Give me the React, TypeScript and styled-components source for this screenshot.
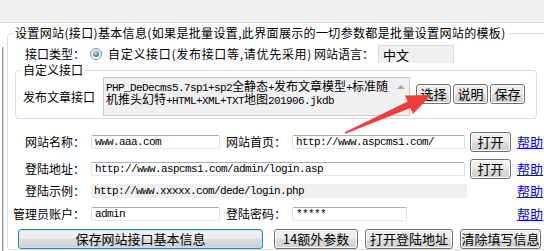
import React from 'react';
import styled, { createGlobalStyle } from 'styled-components';

const GlobalStyle = createGlobalStyle`
  html, body {
    margin: 0;
    padding: 0;
    background: #fff;
  }
  body {
    font-family: "Noto Sans CJK SC", "Liberation Sans", sans-serif;
    font-size: 12px;
    color: #000;
  }
`;

const splitRuns = (text: string) => text.match(/[\x20-\x7e]+|[^\x20-\x7e]+/g) ?? [];

function MixedText({ text }: { text: string }) {
  return (
    <>
      {splitRuns(text).map((run, i) =>
        /^[\x20-\x7e]+$/.test(run) ? <Ascii key={i}>{run}</Ascii> : <Wide key={i}>{run}</Wide>
      )}
    </>
  );
}

function App() {
  return (
    <Page>
      <GlobalStyle />
      <TopBar />
      <Body>
        <Rail />
        <Main>
          <Group $width={600}>
            <GroupTitle $spacing={0.35}>
              设置网站(接口)基本信息(如果是批量设置,此界面展示的一切参数都是批量设置网站的模板)
            </GroupTitle>
            <TypeRow>
              <FieldLabel>接口类型：</FieldLabel>
              <Radio />
              <RadioText>自定义接口(发布接口等,请优先采用)</RadioText>
              <LangLabel>网站语言：</LangLabel>
              <LangBox>中文</LangBox>
            </TypeRow>

            <InnerGroup $width={522}>
              <GroupTitle>自定义接口</GroupTitle>
              <ApiRow>
                <ApiLabel>发布文章接口</ApiLabel>
                <FakeTextarea>
                  <TextLines>
                    <Line><MixedText text="PHP_DeDecms5.7sp1+sp2全静态+发布文章模型+标准随" /></Line>
                    <Line><MixedText text="机推头幻特+HTML+XML+TXT地图201906.jkdb" /></Line>
                  </TextLines>
                  <ScrollBar>
                    <ScrollArrow $dir="up" />
                    <ScrollArrow $dir="down" />
                  </ScrollBar>
                </FakeTextarea>
                <SmallButtons>
                  <WinButton $w={35}>选择</WinButton>
                  <WinButton $w={35}>说明</WinButton>
                  <WinButton $w={35}>保存</WinButton>
                </SmallButtons>
              </ApiRow>
            </InnerGroup>

            <FormRow $h={21} $gap={12}>
              <FieldLabel>网站名称：</FieldLabel>
              <Middle>
                <TextBox $w={129} defaultValue="www.aaa.com" readOnly />
                <InlineLabel>网站首页：</InlineLabel>
                <TextBox $w={173} defaultValue="http://www.aspcms1.com/" readOnly />
                <WinButton $w={41} $ml={5}>打开</WinButton>
              </Middle>
              <HelpLink href="#">帮助</HelpLink>
            </FormRow>

            <FormRow $h={21} $gap={6}>
              <FieldLabel>登陆地址：</FieldLabel>
              <Middle>
                <TextBox $w={374} defaultValue="http://www.aspcms1.com/admin/login.asp" readOnly />
                <WinButton $w={41} $ml={5}>打开</WinButton>
              </Middle>
              <HelpLink href="#">帮助</HelpLink>
            </FormRow>

            <FormRow $h={14} $gap={5}>
              <FieldLabel>登陆示例：</FieldLabel>
              <Middle>
                <SampleText>http://www.xxxxx.com/dede/login.php</SampleText>
              </Middle>
              <HelpLink href="#">帮助</HelpLink>
            </FormRow>

            <FormRow $h={20} $gap={6}>
              <FieldLabel>管理员账户：</FieldLabel>
              <Middle>
                <TextBox $w={129} defaultValue="admin" readOnly />
                <InlineLabel>登陆密码：</InlineLabel>
                <TextBox $w={115} defaultValue="*****" readOnly />
              </Middle>
              <HelpLink href="#">帮助</HelpLink>
            </FormRow>

            <ActionRow>
              <WinButton $w={245} $primary>保存网站接口基本信息</WinButton>
              <WinButton $w={84} $ml={4}>14额外参数</WinButton>
              <WinButton $w={88}>打开登陆地址</WinButton>
              <WinButton $w={81}>清除填写信息</WinButton>
            </ActionRow>
          </Group>
        </Main>
      </Body>

      <Arrow viewBox="0 0 544 251">
        <polygon
          points="344.7,132.3 407.6,101.5 405,95.6 431,95 413,113.9 410.4,107.9 345.3,133.7"
          fill="#f03c3c"
        />
      </Arrow>
    </Page>
  );
}

const Page = styled.div`
  position: relative;
  width: 544px;
  height: 251px;
  overflow: hidden;
  background: #fff;
`;

const TopBar = styled.div`
  height: 22px;
  background: #f0f0f0;
  border-bottom: 1px solid #d9d9d9;
`;

const Body = styled.div`
  display: flex;
  height: 228px;
`;

const Rail = styled.div`
  width: 2px;
  margin: 24px 0 0 2px;
  border-left: 1px solid #9a9a9a;
  border-right: 1px solid #d4d4d4;
  background: #e6e6e6;
`;

const Main = styled.div`
  flex: 1;
  padding: 3px 0 0 3px;
`;

const Group = styled.fieldset<{ $width: number }>`
  box-sizing: border-box;
  width: ${({ $width }) => $width}px;
  min-width: 0;
  margin: 0;
  padding: 0;
  border: 1px solid #d5dfe5;
  border-radius: 4px;
`;

const InnerGroup = styled(Group)`
  margin-left: 7px;
`;

const GroupTitle = styled.legend<{ $spacing?: number }>`
  margin-left: 5px;
  padding: 0 2px;
  height: 14px;
  font-size: 12px;
  line-height: 14px;
  letter-spacing: ${({ $spacing }) => $spacing ?? 0}px;
  white-space: nowrap;
`;

const TypeRow = styled.div`
  display: flex;
  align-items: center;
  height: 18px;
  margin-top: 5px;
`;

const FieldLabel = styled.span`
  width: 77px;
  flex: none;
  text-align: right;
  white-space: nowrap;
  line-height: 14px;
`;

const Radio = styled.span`
  position: relative;
  box-sizing: border-box;
  width: 12px;
  height: 12px;
  margin-left: 5px;
  border: 1px solid #8e8f8f;
  border-radius: 50%;
  background: linear-gradient(#e6e6e6, #ffffff);

  &::after {
    content: '';
    position: absolute;
    left: 2px;
    top: 2px;
    width: 6px;
    height: 6px;
    border-radius: 50%;
    background: radial-gradient(circle at 40% 35%, #bfe6fc 0%, #3b93d3 55%, #1a4f7c 100%);
  }
`;

const RadioText = styled.span`
  width: 204px;
  flex: none;
  margin-left: 6px;
  letter-spacing: 0.7px;
  white-space: nowrap;
  line-height: 14px;
`;

const LangLabel = styled.span`
  width: 60px;
  flex: none;
  margin-left: 2px;
  white-space: nowrap;
  line-height: 14px;
`;

const LangBox = styled.div`
  box-sizing: border-box;
  width: 76px;
  height: 18px;
  margin-left: 4px;
  padding-left: 4px;
  background: #f0f0f0;
  border: 1px solid #dadada;
  border-bottom: none;
  font-size: 13px;
  line-height: 17px;
`;

const ApiRow = styled.div`
  display: flex;
  align-items: flex-start;
  height: 41px;
  padding-left: 7px;
`;

const ApiLabel = styled.span`
  width: 72px;
  margin-right: 8px;
  white-space: nowrap;
  line-height: 39px;
`;

const FakeTextarea = styled.div`
  box-sizing: border-box;
  display: flex;
  width: 307px;
  height: 39px;
  background: #f0f0f0;
  border: 1px solid #c9c9c9;
`;

const TextLines = styled.div`
  flex: 1;
  min-width: 0;
  padding: 1px 0 0 2px;
  overflow: hidden;
`;

const Line = styled.div`
  display: flex;
  align-items: baseline;
  height: 13px;
  line-height: 13px;
  white-space: nowrap;
`;

const Wide = styled.span`
  font-size: 12px;
  line-height: 13px;
`;

const Ascii = styled.span`
  font-family: "Liberation Mono", monospace;
  font-size: 11px;
  line-height: 13px;
  letter-spacing: -0.6px;
`;

const ScrollBar = styled.div`
  display: flex;
  flex: none;
  flex-direction: column;
  justify-content: space-between;
  align-items: center;
  width: 16px;
  padding: 7px 0 5px;
  background: #f0f0f0;
`;

const ScrollArrow = styled.span<{ $dir: 'up' | 'down' }>`
  width: 0;
  height: 0;
  border-left: 4px solid transparent;
  border-right: 4px solid transparent;
  ${({ $dir }) =>
    $dir === 'up' ? 'border-bottom: 4px solid #a8a8a8;' : 'border-top: 4px solid #a8a8a8;'}
`;

const SmallButtons = styled.div`
  display: flex;
  gap: 2px;
  margin: 7px 0 0 6px;
`;

const WinButton = styled.button<{ $w: number; $ml?: number; $primary?: boolean }>`
  box-sizing: border-box;
  width: ${({ $w }) => $w}px;
  height: 20px;
  margin: 0 0 0 ${({ $ml }) => $ml ?? 0}px;
  padding: 0;
  flex: none;
  font-family: "Noto Sans CJK SC", sans-serif;
  font-size: 13px;
  line-height: 18px;
  color: #000;
  border: 1px solid ${({ $primary }) => ($primary ? '#3c7fb1' : '#707070')};
  border-radius: 3px;
  background: linear-gradient(#f2f2f2 0%, #ebebeb 50%, #dddddd 51%, #cfcfcf 100%);
  box-shadow: inset 0 0 0 1px ${({ $primary }) => ($primary ? '#bfe3f8' : '#fcfcfc')};
`;

const FormRow = styled.div<{ $h: number; $gap: number }>`
  display: flex;
  align-items: center;
  height: ${({ $h }) => $h}px;
  margin-top: ${({ $gap }) => $gap}px;
`;

const Middle = styled.div`
  display: flex;
  align-items: center;
  width: 420px;
  margin-left: 6px;
  flex: none;
`;

const InlineLabel = styled.span`
  width: 60px;
  margin: 0 6px;
  flex: none;
  white-space: nowrap;
  line-height: 14px;
`;

const TextBox = styled.input<{ $w: number }>`
  box-sizing: border-box;
  width: ${({ $w }) => $w}px;
  height: 100%;
  margin: 0;
  padding: 0 3px;
  flex: none;
  font-family: "Liberation Mono", monospace;
  font-size: 11px;
  letter-spacing: -0.6px;
  color: #000;
  background: #fff;
  border: 1px solid;
  border-color: #abadb3 #dbdfe6 #e3e9ef #e2e3ea;
  border-radius: 2px;
  outline: none;
`;

const SampleText = styled.div`
  box-sizing: border-box;
  width: 376px;
  height: 14px;
  padding-left: 3px;
  background: #f0f0f0;
  font-family: "Liberation Mono", monospace;
  font-size: 11px;
  letter-spacing: -0.6px;
  line-height: 14px;
  white-space: nowrap;
`;

const HelpLink = styled.a`
  margin-left: 6px;
  color: #0000ff;
  font-size: 13px;
  line-height: 14px;
  text-decoration: underline;
  white-space: nowrap;
`;

const ActionRow = styled.div`
  display: flex;
  align-items: center;
  gap: 7px;
  height: 20px;
  margin: 5px 0 0 10px;
`;

const Arrow = styled.svg`
  position: absolute;
  left: 0;
  top: 0;
  width: 544px;
  height: 251px;
  pointer-events: none;
`;

export default App;
